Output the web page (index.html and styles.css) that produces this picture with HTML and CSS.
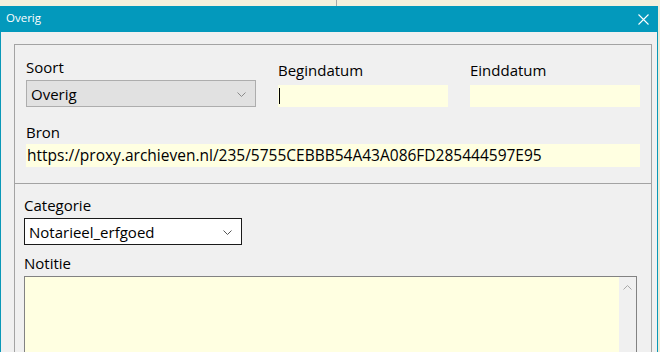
FILE: index.html
```html
<!DOCTYPE html>
<html>
<head>
<meta charset="utf-8">
<link rel="stylesheet" href="styles.css">
</head>
<body>
<div class="desktop">
  <div class="strip"><span class="strip-line"></span></div>
  <div class="window">
    <div class="titlebar">
      <span class="title">Overig</span>
      <svg class="close" width="11" height="11" viewBox="0 0 11 11"><path d="M0.5 0.5 L10.5 10.5 M10.5 0.5 L0.5 10.5" stroke="#fff" stroke-width="1.1" fill="none"/></svg>
    </div>
    <div class="body">
      <div class="group">
        <div class="section top">
          <div class="row">
            <div class="field soort">
              <div class="label">Soort</div>
              <div class="select grey"><span>Overig</span><svg class="chev" width="9" height="5" viewBox="0 0 9 5"><path d="M0.5 0.5 L4.5 4.5 L8.5 0.5" stroke="#8a8a8a" fill="none"/></svg></div>
            </div>
            <div class="field date begin">
              <div class="label">Begindatum</div>
              <div class="input short"><span class="caret"></span></div>
            </div>
            <div class="field date">
              <div class="label">Einddatum</div>
              <div class="input short"></div>
            </div>
          </div>
          <div class="field bron">
            <div class="label">Bron</div>
            <div class="input wide">https://proxy.archieven.nl/235/5755CEBBB54A43A086FD285444597E95</div>
          </div>
        </div>
        <div class="section bottom">
          <div class="field">
            <div class="label">Categorie</div>
            <div class="select white"><span>Notarieel_erfgoed</span><svg class="chev" width="9" height="5" viewBox="0 0 9 5"><path d="M0.5 0.5 L4.5 4.5 L8.5 0.5" stroke="#555" fill="none"/></svg></div>
          </div>
          <div class="field notitie">
            <div class="label">Notitie</div>
            <div class="memo">
              <div class="memo-text"></div>
              <div class="scrollbar"><svg width="9" height="5" viewBox="0 0 9 5"><path d="M0.5 4.5 L4.5 0.5 L8.5 4.5" stroke="#a8a8a8" fill="none"/></svg></div>
            </div>
          </div>
        </div>
      </div>
    </div>
  </div>
</div>
</body>
</html>
```
FILE: styles.css
```css
html, body {
  margin: 0;
  padding: 0;
}
body {
  font-family: "Open Sans", "Noto Sans", sans-serif;
  font-size: 15px;
  line-height: 20px;
  color: #000;
  background: #f3efdc;
}
.desktop {
  width: 660px;
  height: 352px;
  overflow: hidden;
  background: #eeecd8;
}
.strip {
  height: 6px;
  background: #f4f0dd;
  position: relative;
}
.strip-line {
  position: absolute;
  left: 336px;
  top: 0;
  width: 1px;
  height: 6px;
  background: #a9a9a9;
}
.window {
  width: 656px;
  border-left: 1px solid #0a98b8;
  border-right: 1px solid #0a98b8;
  background: #f0f0f0;
}
.titlebar {
  height: 26px;
  margin: 0 -1px;
  padding: 0 0 0 6px;
  background: #0399bc;
  display: flex;
  align-items: flex-start;
  justify-content: space-between;
}
.title {
  color: #fff;
  font-size: 11.5px;
  line-height: 16px;
  padding-top: 4px;
}
.close {
  margin: 8px 9px 0 0;
}
.body {
  padding: 12px 5px 0 13px;
  height: 330px;
}
.group {
  border: 1px solid #a3a3a3;
  border-bottom: none;
  height: 320px;
}
.section.top {
  padding: 12px 10px 16px 11px;
  border-bottom: 1px solid #a3a3a3;
}
.row {
  display: flex;
  align-items: flex-end;
  gap: 22px;
}
.field {
  display: flex;
  flex-direction: column;
}
.soort .label {
  margin-bottom: 3px;
}
.date .label {
  margin-bottom: 5px;
}
.select {
  height: 25px;
  display: flex;
  align-items: center;
  justify-content: space-between;
  padding: 0 9px 0 4px;
}
.select.grey {
  width: 215px;
  background: #e1e1e1;
  border: 1px solid #adadad;
}
.select.white {
  width: 203px;
  background: #fff;
  border: 1px solid #1a1a1a;
}
.chev {
  margin-top: 1px;
}
.input {
  background: #ffffe1;
  height: 22px;
}
.input.short {
  width: 170px;
  position: relative;
}
.caret {
  position: absolute;
  left: 1px;
  top: 3px;
  width: 1px;
  height: 16px;
  background: #000;
}
.bron {
  margin-top: 15px;
}
.bron .label {
  margin-bottom: 2px;
}
.input.wide {
  width: 613px;
  height: 23px;
  line-height: 23px;
  padding-left: 1px;
  font-size: 15.5px;
}
.section.bottom {
  padding: 11px 0 0 9px;
}
.section.bottom .label {
  margin-bottom: 3px;
}
.notitie {
  margin-top: 8px;
}
.notitie .label {
  margin-bottom: 5px;
}
.memo {
  width: 611px;
  height: 90px;
  border: 1px solid #828282;
  display: flex;
  background: #ffffe1;
}
.memo-text {
  flex: 1;
}
.scrollbar {
  width: 17px;
  background: #f0f0f0;
  display: flex;
  justify-content: center;
  align-items: flex-start;
  padding-top: 8px;
}
```
